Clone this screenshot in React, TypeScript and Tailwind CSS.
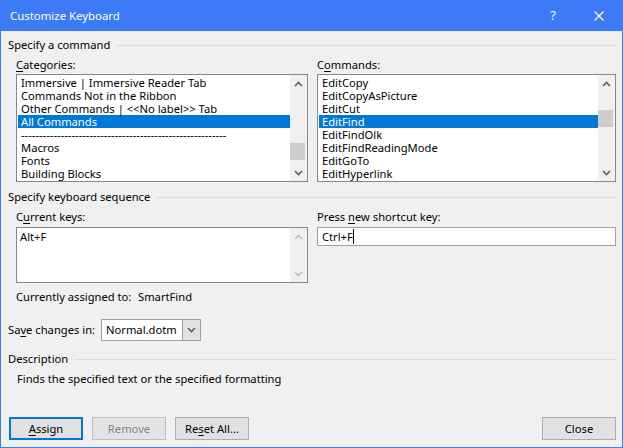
type ListProps = {
  items: string[];
  selected: number;
  thumbClass: string;
  className: string;
};

function Chevron({ up, disabled }: { up?: boolean; disabled?: boolean }) {
  return (
    <svg width="9" height="6" viewBox="0 0 9 6" fill="none">
      <path
        d={up ? "M1 5L4.5 1.5L8 5" : "M1 1L4.5 4.5L8 1"}
        stroke={disabled ? "#c2c2c2" : "#606060"}
        strokeWidth="1.6"
      />
    </svg>
  );
}

function ScrollBar({ thumbClass, disabled }: { thumbClass?: string; disabled?: boolean }) {
  return (
    <div className="flex w-[17px] flex-col bg-[#f0f0f0]">
      <div className="flex h-[17px] items-center justify-center">
        <Chevron up disabled={disabled} />
      </div>
      <div className="flex-1">
        {thumbClass ? <div className={`h-[17px] w-[15px] bg-[#cdcdcd] ${thumbClass}`} /> : null}
      </div>
      <div className="flex h-[17px] items-center justify-center">
        <Chevron disabled={disabled} />
      </div>
    </div>
  );
}

function ListBox({ items, selected, thumbClass, className }: ListProps) {
  return (
    <div className={`flex h-[108px] border border-[#828790] bg-white ${className}`}>
      <div className="flex-1 overflow-hidden pl-[1px] pt-[1px]">
        {items.map((item, i) => (
          <div
            key={i}
            className={`h-[13px] whitespace-nowrap px-[3px] leading-[13px] ${
              i === selected ? "bg-[#0078d7] text-white" : "text-black"
            }`}
          >
            {item}
          </div>
        ))}
      </div>
      <ScrollBar thumbClass={thumbClass} />
    </div>
  );
}

function SectionHeader({ title }: { title: string }) {
  return (
    <div className="flex h-[16px] items-center">
      <span className="whitespace-nowrap leading-[16px]">{title}</span>
      <div className="ml-[6px] h-px flex-1 bg-[#dcdcdc]" />
    </div>
  );
}

function Button({
  children,
  focused,
  disabled,
  className = "",
}: {
  children: React.ReactNode;
  focused?: boolean;
  disabled?: boolean;
  className?: string;
}) {
  return (
    <button
      type="button"
      className={`flex h-[23px] w-[74px] items-center justify-center leading-[16px] ${
        focused
          ? "border-2 border-[#0078d7] bg-[#e1e1e1]"
          : disabled
          ? "border border-[#bfbfbf] bg-[#e3e3e3] text-[#838383]"
          : "border border-[#adadad] bg-[#e1e1e1]"
      } ${className}`}
    >
      {children}
    </button>
  );
}

const categories = [
  "Immersive | Immersive Reader Tab",
  "Commands Not in the Ribbon",
  "Other Commands | <<No label>> Tab",
  "All Commands",
  "---------------------------------------------------------",
  "Macros",
  "Fonts",
  "Building Blocks",
];

const commands = [
  "EditCopy",
  "EditCopyAsPicture",
  "EditCut",
  "EditFind",
  "EditFindOlk",
  "EditFindReadingMode",
  "EditGoTo",
  "EditHyperlink",
];

export default function App() {
  return (
    <div className="flex h-[448px] w-[623px] flex-col border border-t-0 border-[#3c7bf5] bg-[#f0f0f0] font-['Noto_Sans',sans-serif] text-[11.2px] text-black">
      <div className="flex h-[31px] items-center bg-[#3c7bf5] pl-[9px] text-white">
        <span className="flex-1 text-[11.4px]">Customize Keyboard</span>
        <span className="w-[10px] text-center text-[13px]">?</span>
        <div className="ml-[36px] mr-[18px] flex h-[10px] w-[10px] items-center">
          <svg width="10" height="10" viewBox="0 0 10 10" fill="none">
            <path d="M0.5 0.5L9.5 9.5M9.5 0.5L0.5 9.5" stroke="white" strokeWidth="1.1" />
          </svg>
        </div>
      </div>

      <div className="flex flex-1 flex-col pl-[7px] pr-[6px]">
        <div className="mt-[6px]">
          <SectionHeader title="Specify a command" />
        </div>

        <div className="mt-[4px] flex gap-[9px] pl-[8px]">
          <div className="flex w-[292px] flex-col">
            <div className="h-[16px] leading-[16px]">
              <span className="underline underline-offset-2">C</span>ategories:
            </div>
            <ListBox items={categories} selected={3} thumbClass="mt-[51px]" className="mt-[1px]" />
          </div>
          <div className="flex flex-1 flex-col">
            <div className="h-[16px] leading-[16px]">
              C<span className="underline underline-offset-2">o</span>mmands:
            </div>
            <ListBox items={commands} selected={3} thumbClass="mt-[18px]" className="mt-[1px]" />
          </div>
        </div>

        <div className="mt-[7px]">
          <SectionHeader title="Specify keyboard sequence" />
        </div>

        <div className="mt-[4px] flex gap-[9px] pl-[8px]">
          <div className="flex w-[292px] flex-col">
            <div className="h-[16px] leading-[16px]">
              C<span className="underline underline-offset-2">u</span>rrent keys:
            </div>
            <div className="mt-[2px] flex h-[56px] border border-[#828790] bg-white">
              <div className="flex-1 px-[3px] pt-[1px] leading-[16px]">Alt+F</div>
              <ScrollBar disabled />
            </div>
            <div className="mt-[6px] flex h-[16px] whitespace-nowrap leading-[16px]">
              <span className="w-[122px]">Currently assigned to:</span>
              <span>SmartFind</span>
            </div>
          </div>
          <div className="flex flex-1 flex-col">
            <div className="h-[16px] leading-[16px]">
              Press <span className="underline underline-offset-2">n</span>ew shortcut key:
            </div>
            <div className="mt-[2px] flex h-[19px] items-center border border-[#a0a0a0] bg-white px-[4px]">
              <span className="leading-[16px]">Ctrl+F</span>
              <span className="h-[15px] w-px bg-black" />
            </div>
          </div>
        </div>

        <div className="mt-[14px] flex h-[22px] items-center">
          <span className="w-[93px] whitespace-nowrap leading-[16px]">
            Sa<span className="underline underline-offset-2">v</span>e changes in:
          </span>
          <div className="flex h-[22px] w-[100px] border border-[#a0a0a0] bg-white">
            <span className="flex-1 whitespace-nowrap pl-[4px] leading-[20px]">Normal.dotm</span>
            <div className="flex w-[18px] items-center justify-center border-l border-[#a0a0a0] bg-[#e1e1e1]">
              <Chevron />
            </div>
          </div>
        </div>

        <div className="mt-[10px]">
          <SectionHeader title="Description" />
        </div>
        <div className="mt-[4px] pl-[9px] leading-[16px]">
          Finds the specified text or the specified formatting
        </div>

        <div className="mb-[7px] mt-auto flex items-center gap-[9px] pl-[1px]">
          <Button focused>
            <span className="underline underline-offset-2">A</span>ssign
          </Button>
          <Button disabled>Remove</Button>
          <Button>
            Re<span className="underline underline-offset-2">s</span>et All...
          </Button>
          <Button className="ml-auto">Close</Button>
        </div>
      </div>
    </div>
  );
}
